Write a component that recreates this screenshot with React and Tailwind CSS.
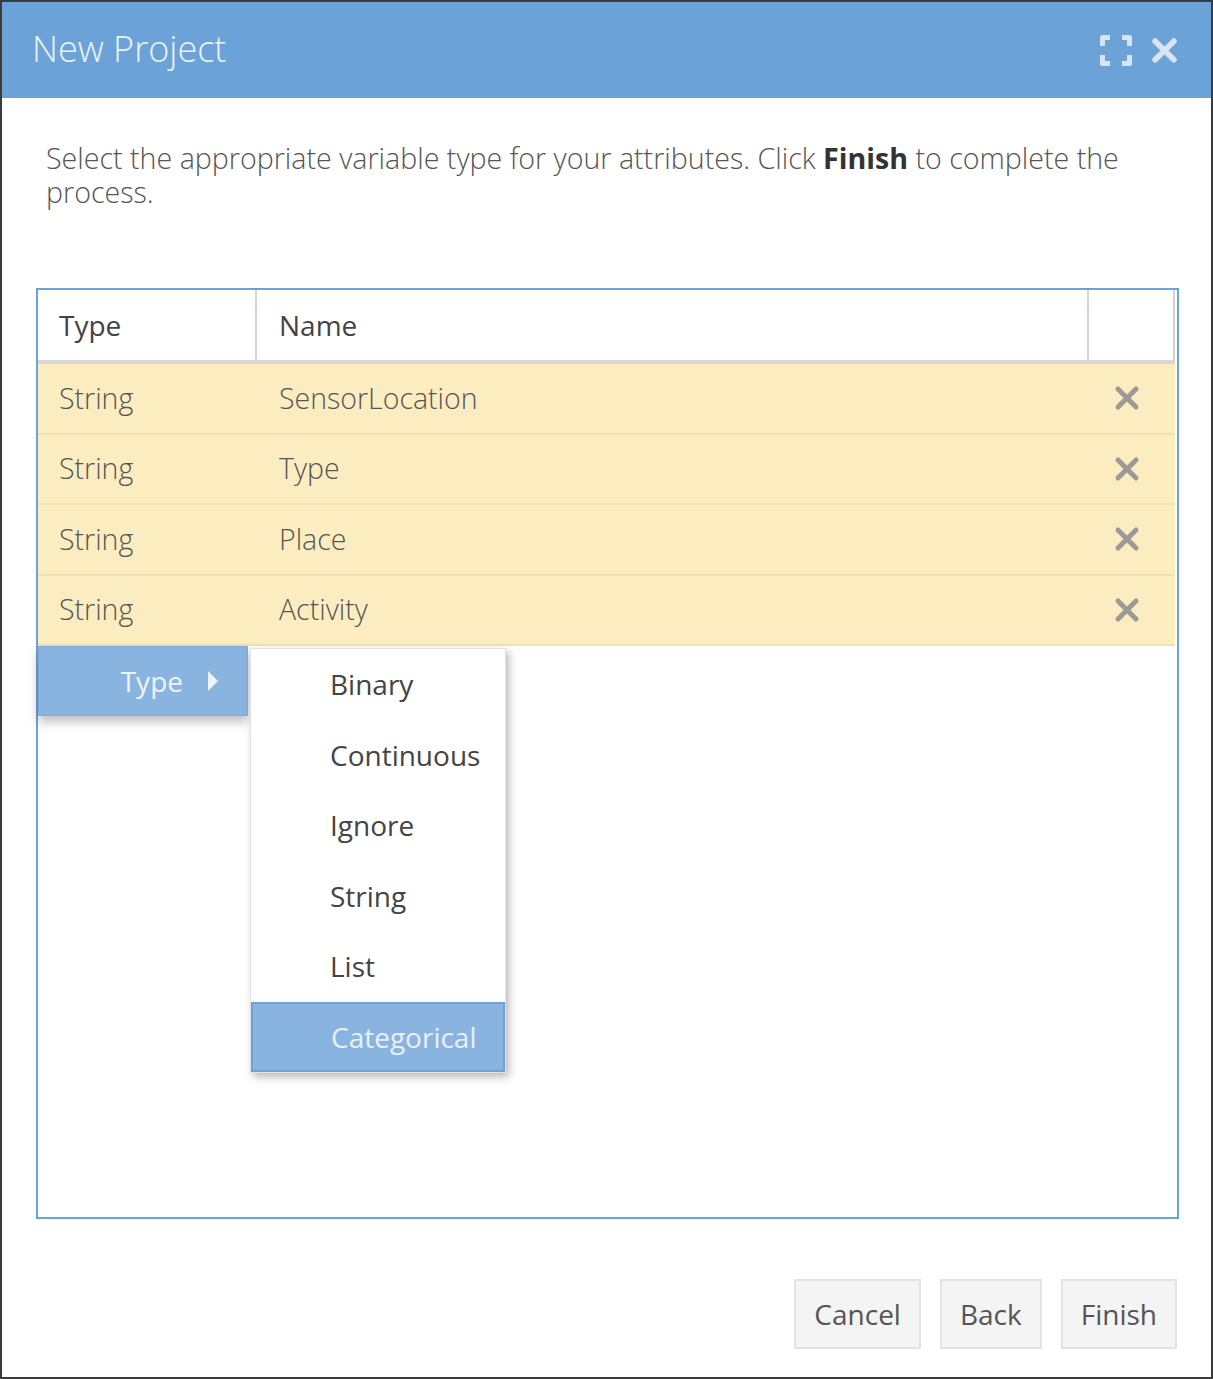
import React from "react";

const font = { fontFamily: '"Open Sans", "Noto Sans", sans-serif' };

function XIcon({ className = "", size = 26, stroke = 5 }) {
  return (
    <svg width={size} height={size} viewBox="0 0 26 26" className={className}>
      <path d="M4 4 L22 22 M22 4 L4 22" stroke="currentColor" strokeWidth={stroke} strokeLinecap="round" fill="none" />
    </svg>
  );
}

function MaxIcon() {
  return (
    <svg width="32" height="31" viewBox="0 0 32 31">
      <path
        d="M2.5 11 V2.5 H10 M22 2.5 H29.5 V11 M29.5 20 V28.5 H22 M10 28.5 H2.5 V20"
        stroke="currentColor"
        strokeWidth="5"
        fill="none"
        strokeLinejoin="round"
      />
    </svg>
  );
}

const rows = [
  ["String", "SensorLocation"],
  ["String", "Type"],
  ["String", "Place"],
  ["String", "Activity"],
];

const menuItems = ["Binary", "Continuous", "Ignore", "String", "List"];

export default function App() {
  return (
    <div style={font} className="w-[1213px] h-[1379px] bg-white border-2 border-[#3b3b3b] flex flex-col">
      <div className="h-[96px] bg-[#6ba3d8] flex items-center justify-between pl-[30px] pr-[33px]">
        <div className="text-[36px] font-light text-[#eef2f7] leading-none -mt-[2px]">New Project</div>
        <div className="flex items-center gap-[19px] text-[#dbe4ee]">
          <MaxIcon />
          <XIcon size={27} stroke={5.5} />
        </div>
      </div>

      <div className="pt-[43px] pl-[44px] pr-[40px] text-[28.6px] font-light leading-[34px] text-[#555]">
        <div className="flex items-baseline whitespace-pre">
          <span>Select the appropriate variable type for your attributes. Click </span>
          <span className="font-bold text-[#333]">Finish</span>
          <span> to complete the</span>
        </div>
        <div>process.</div>
      </div>

      <div className="ml-[34px] mr-[32px] mt-[79px] h-[931px] border-2 border-[#6ba3d8] relative pr-[2px]">
        <div className="flex h-[74px] border-b-[4px] border-[#d6d6d6] text-[28px] text-[#444]">
          <div className="w-[219px] border-r-2 border-[#d4d4d4] flex items-center pl-[21px]">Type</div>
          <div className="flex-1 border-r-2 border-[#d4d4d4] flex items-center pl-[22px]">Name</div>
          <div className="w-[86px] border-r-2 border-[#d4d4d4]"></div>
        </div>
        {rows.map(([t, n], i) => (
          <div
            key={i}
            className="flex h-[70.5px] bg-[#fcedc1] border-b-2 border-[#f2e2b3] text-[28.5px] font-light text-[#555]"
          >
            <div className="w-[219px] flex items-center pl-[21px]">{t}</div>
            <div className="flex-1 flex items-center pl-[22px]">{n}</div>
            <div className="w-[86px] flex items-center justify-center pr-[10px] text-[#9c9a96]">
              <XIcon size={26} stroke={5} />
            </div>
          </div>
        ))}

        <div className="absolute left-0 top-[356px] w-[210px] h-[70px] bg-[#8ab4e0] border border-[#7eaadb] shadow-[0_6px_10px_rgba(0,0,0,0.25)] flex items-center justify-end pr-[28px] gap-[24px]">
          <span className="text-[28px] text-[#eef3f8]">Type</span>
          <svg width="12" height="20" viewBox="0 0 12 20">
            <path d="M1 0 L11 10 L1 20 Z" fill="#eef3f8" />
          </svg>
        </div>

        <div className="absolute left-[212px] top-[358px] w-[256px] bg-white border border-[#e2e2e2] shadow-[3px_4px_8px_rgba(0,0,0,0.28)] flex flex-col">
          {menuItems.map((m) => (
            <div key={m} className="h-[70.5px] flex items-center pl-[79px] text-[28px] text-[#444]">
              {m}
            </div>
          ))}
          <div className="h-[70px] flex items-center pl-[78px] text-[28px] text-[#e9f0f7] bg-[#8ab4e0] border-2 border-[#6fa3d8]">
            Categorical
          </div>
        </div>
      </div>

      <div className="flex justify-end gap-[19px] mt-[60px] mr-[34px]">
        {["Cancel", "Back", "Finish"].map((b) => (
          <div
            key={b}
            className="h-[70px] px-[18px] bg-[#f4f4f4] border-2 border-[#e3e3e3] flex items-center text-[28px] text-[#555]"
          >
            {b}
          </div>
        ))}
      </div>
    </div>
  );
}
